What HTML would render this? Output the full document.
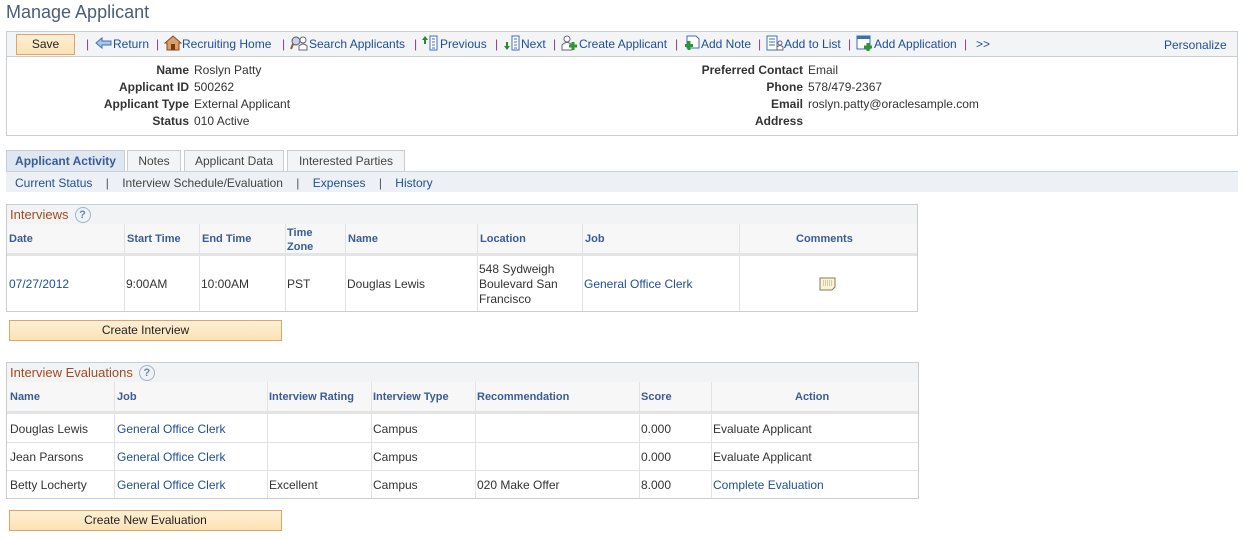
<!DOCTYPE html>
<html><head><meta charset="utf-8"><style>
*{margin:0;padding:0;box-sizing:border-box}
body{width:1243px;height:539px;background:#fff;font-family:"Liberation Sans",Arial,sans-serif;font-size:12px;color:#333;position:relative;overflow:hidden}
.a{position:absolute;white-space:nowrap}
.lk{color:#1f4e96}
.title{left:6px;top:2px;font-size:18px;color:#4a5d78}
.tb{left:6px;top:31px;width:1232px;height:26px;background:#f2f4f5;border:1px solid #c9cdd0}
.btn{background:linear-gradient(#fdf0d6,#fbe2b4);border:1px solid #e0a469;text-align:center;color:#222;font-size:12px}
.info{left:6px;top:56px;width:1232px;height:80px;border:1px solid #c9cdd0;border-top:none}
.lb{font-weight:bold;color:#333;text-align:right}
.sep{position:absolute;top:37px;color:#8b3a8b}
.t{position:absolute;top:37px;color:#1f4e96}
.ic{position:absolute;top:35px}
.tab{top:150px;height:22px;border:1px solid #c9cdd0;border-bottom:none;background:#f2f4f5;color:#444;text-align:center;line-height:20px;font-size:12px}
.grid{border:1px solid #c9cdd0;background:#fff}
.gt{background:#f1f3f4;color:#a44a1f;font-size:13px;padding-left:3px}
.hc{color:#3a5c93;font-weight:bold;font-size:11px}
.vl{position:absolute;width:1px;background:#e0e2e4}
.hl{position:absolute;height:1px;background:#e0e2e4}
.q{display:inline-block;width:16px;height:16px;border-radius:50%;border:1px solid #9fb3cc;background:#eef3f9;color:#6b84a8;font-size:11px;font-weight:bold;text-align:center;line-height:14px;margin-left:6px;vertical-align:1px}
</style></head><body>
<div class="a title">Manage Applicant</div>
<div class="a tb"></div>
<div class="a btn" style="left:16px;top:34px;width:59px;height:21px;line-height:19px">Save</div>

<span class="sep" style="left:86px">|</span>
<svg class="ic" style="left:95px" width="18" height="16"><path d="M1 8 L7 3 V6 H16 V10 H7 V13 Z" fill="#a9c4e8" stroke="#3d6fb5"/></svg>
<span class="t" style="left:113px">Return</span>
<span class="sep" style="left:156px">|</span>
<svg class="ic" style="left:164px" width="18" height="16"><path d="M1 8 L9 1 L17 8 H15 V15 H3 V8 Z" fill="#d9a06a" stroke="#8a4a20"/><rect x="7" y="9" width="4" height="6" fill="#7a3a12"/></svg>
<span class="t" style="left:182px">Recruiting Home</span>
<span class="sep" style="left:282px">|</span>
<svg class="ic" style="left:290px" width="18" height="16"><circle cx="6" cy="6" r="4" fill="#c8d4e4" stroke="#556"/><path d="M3 9 L1 14" stroke="#8a5a3a" stroke-width="2"/><circle cx="13" cy="5" r="3" fill="#fff" stroke="#667"/><path d="M9 15 V11 Q13 7 17 11 V15 Z" fill="#fff" stroke="#667"/></svg>
<span class="t" style="left:309px">Search Applicants</span>
<span class="sep" style="left:414px">|</span>
<svg class="ic" style="left:421px" width="18" height="16"><path d="M4 1 L1 5 H3 V9 H5 V5 H7 Z" fill="#2a8a2a"/><rect x="9" y="1" width="7" height="14" fill="#fff" stroke="#3d6fb5"/><path d="M11 4H14M11 7H14M11 10H14M11 13H14" stroke="#3d6fb5"/></svg>
<span class="t" style="left:440px">Previous</span>
<span class="sep" style="left:495px">|</span>
<svg class="ic" style="left:503px" width="18" height="16"><path d="M4 15 L1 11 H3 V7 H5 V11 H7 Z" fill="#2a8a2a"/><rect x="9" y="1" width="7" height="14" fill="#fff" stroke="#3d6fb5"/><path d="M11 4H14M11 7H14M11 10H14M11 13H14" stroke="#3d6fb5"/></svg>
<span class="t" style="left:521px">Next</span>
<span class="sep" style="left:553px">|</span>
<svg class="ic" style="left:561px" width="18" height="16"><circle cx="6" cy="4" r="3" fill="#fff" stroke="#667"/><path d="M1 15 V10 Q6 5 11 10 V15 Z" fill="#fff" stroke="#667"/><path d="M12 7 V15 M8 11 H16" stroke="#2a9a2a" stroke-width="3"/></svg>
<span class="t" style="left:579px">Create Applicant</span>
<span class="sep" style="left:675px">|</span>
<svg class="ic" style="left:683px" width="18" height="16"><path d="M4 1 H13 L16 4 V13 H4 Z" fill="#fff" stroke="#3d6fb5"/><path d="M6 6 V15 M2 10.5 H10" stroke="#2a9a2a" stroke-width="3"/></svg>
<span class="t" style="left:701px">Add Note</span>
<span class="sep" style="left:758px">|</span>
<svg class="ic" style="left:766px" width="18" height="16"><rect x="1" y="1" width="10" height="14" fill="#fff" stroke="#3d6fb5"/><path d="M3 4H9M3 7H9M3 10H9" stroke="#3d6fb5"/><circle cx="14" cy="8" r="2" fill="#fff" stroke="#667"/><path d="M11 15 V12 Q14 9 17 12 V15Z" fill="#fff" stroke="#667"/></svg>
<span class="t" style="left:784px">Add to List</span>
<span class="sep" style="left:848px">|</span>
<svg class="ic" style="left:856px" width="18" height="16"><rect x="1" y="1" width="13" height="13" fill="#fff" stroke="#3d6fb5"/><rect x="1" y="1" width="13" height="3" fill="#3d6fb5"/><path d="M12 8 V16 M8 12 H16" stroke="#2a9a2a" stroke-width="3"/></svg>
<span class="t" style="left:874px">Add Application</span>
<span class="sep" style="left:964px">|</span>
<span class="t" style="left:976px">&gt;&gt;</span>
<div class="a lk" style="left:1164px;top:38px">Personalize</div>

<div class="a info"></div>
<div class="a lb" style="left:60px;top:62px;width:129px;line-height:17px">Name<br>Applicant ID<br>Applicant Type<br>Status</div>
<div class="a" style="left:194px;top:62px;line-height:17px">Roslyn Patty<br>500262<br>External Applicant<br>010 Active</div>
<div class="a lb" style="left:660px;top:62px;width:143px;line-height:17px">Preferred Contact<br>Phone<br>Email<br>Address</div>
<div class="a" style="left:808px;top:62px;line-height:17px">Email<br>578/479-2367<br>roslyn.patty@oraclesample.com</div>
<div class="a tab" style="left:6px;width:119px;background:#dfe8f2;color:#3a5c93;font-weight:bold">Applicant Activity</div>
<div class="a tab" style="left:127px;width:54px">Notes</div>
<div class="a tab" style="left:184px;width:100px">Applicant Data</div>
<div class="a tab" style="left:287px;width:118px">Interested Parties</div>
<div class="a" style="left:6px;top:171px;width:1232px;height:21px;background:#edf1f5;border-top:1px solid #c6d2e0"></div>
<div class="a" style="left:15px;top:176px"><span class="lk">Current Status</span> &nbsp;&nbsp; <span style="color:#555">|</span> &nbsp;&nbsp; <span style="color:#444">Interview Schedule/Evaluation</span> &nbsp;&nbsp; <span style="color:#555">|</span> &nbsp;&nbsp; <span class="lk">Expenses</span> &nbsp;&nbsp; <span style="color:#555">|</span> &nbsp;&nbsp; <span class="lk">History</span></div>

<div class="a grid" style="left:6px;top:204px;width:912px;height:108px"></div>
<div class="a gt" style="left:7px;top:205px;width:910px;height:19px;line-height:19px">Interviews<span class="q">?</span></div>
<div class="a" style="left:7px;top:224px;width:910px;height:32px;background:#f7f7f7;border-bottom:3px solid #e4e4e4"></div>
<div class="vl" style="left:124px;top:224px;height:87px"></div><div class="vl" style="left:199px;top:224px;height:87px"></div><div class="vl" style="left:285px;top:224px;height:87px"></div><div class="vl" style="left:345px;top:224px;height:87px"></div><div class="vl" style="left:477px;top:224px;height:87px"></div><div class="vl" style="left:582px;top:224px;height:87px"></div><div class="vl" style="left:739px;top:224px;height:87px"></div>
<div class="a hc" style="left:9px;top:233px">Date</div><div class="a hc" style="left:127px;top:233px">Start Time</div><div class="a hc" style="left:202px;top:233px">End Time</div><div class="a hc" style="left:287px;top:226px;line-height:14px">Time<br>Zone</div><div class="a hc" style="left:348px;top:233px">Name</div><div class="a hc" style="left:480px;top:233px">Location</div><div class="a hc" style="left:585px;top:233px">Job</div><div class="a hc" style="left:796px;top:233px">Comments</div>
<div class="a lk" style="left:9px;top:277px">07/27/2012</div><div class="a" style="left:126px;top:277px">9:00AM</div><div class="a" style="left:201px;top:277px">10:00AM</div><div class="a" style="left:287px;top:277px">PST</div><div class="a" style="left:347px;top:277px">Douglas Lewis</div><div class="a" style="left:479px;top:262px;line-height:15px">548 Sydweigh<br>Boulevard San<br>Francisco</div><div class="a lk" style="left:584px;top:277px">General Office Clerk</div>
<svg class="a" style="left:819px;top:277px" width="18" height="14"><path d="M1 1 H16 V10 L13 13 H1 Z" fill="#fbf3d6" stroke="#8a7a55"/><path d="M4 4H13M4 6H13M4 8H13" stroke="#b0a080" stroke-dasharray="1 1"/></svg>
<div class="a btn" style="left:9px;top:320px;width:273px;height:21px;line-height:19px">Create Interview</div>

<div class="a grid" style="left:6px;top:362px;width:913px;height:137px"></div>
<div class="a gt" style="left:7px;top:363px;width:911px;height:19px;line-height:19px">Interview Evaluations<span class="q">?</span></div>
<div class="a" style="left:7px;top:382px;width:911px;height:32px;background:#f7f7f7;border-bottom:3px solid #e4e4e4"></div>
<div class="hl" style="left:7px;top:442px;width:911px"></div><div class="hl" style="left:7px;top:470px;width:911px"></div>
<div class="vl" style="left:114px;top:382px;height:116px"></div><div class="vl" style="left:267px;top:382px;height:116px"></div><div class="vl" style="left:371px;top:382px;height:116px"></div><div class="vl" style="left:475px;top:382px;height:116px"></div><div class="vl" style="left:639px;top:382px;height:116px"></div><div class="vl" style="left:711px;top:382px;height:116px"></div>
<div class="a hc" style="left:10px;top:391px">Name</div><div class="a hc" style="left:117px;top:391px">Job</div><div class="a hc" style="left:269px;top:391px">Interview Rating</div><div class="a hc" style="left:373px;top:391px">Interview Type</div><div class="a hc" style="left:477px;top:391px">Recommendation</div><div class="a hc" style="left:641px;top:391px">Score</div><div class="a hc" style="left:795px;top:391px">Action</div>
<div class="a" style="left:10px;top:422px">Douglas Lewis</div><div class="a lk" style="left:117px;top:422px">General Office Clerk</div><div class="a" style="left:373px;top:422px">Campus</div><div class="a" style="left:641px;top:422px">0.000</div><div class="a" style="left:713px;top:422px">Evaluate Applicant</div>
<div class="a" style="left:10px;top:450px">Jean Parsons</div><div class="a lk" style="left:117px;top:450px">General Office Clerk</div><div class="a" style="left:373px;top:450px">Campus</div><div class="a" style="left:641px;top:450px">0.000</div><div class="a" style="left:713px;top:450px">Evaluate Applicant</div>
<div class="a" style="left:10px;top:478px">Betty Locherty</div><div class="a lk" style="left:117px;top:478px">General Office Clerk</div><div class="a" style="left:269px;top:478px">Excellent</div><div class="a" style="left:373px;top:478px">Campus</div><div class="a" style="left:477px;top:478px">020 Make Offer</div><div class="a" style="left:641px;top:478px">8.000</div><div class="a lk" style="left:713px;top:478px">Complete Evaluation</div>
<div class="a btn" style="left:9px;top:510px;width:273px;height:21px;line-height:19px">Create New Evaluation</div>
</body></html>
